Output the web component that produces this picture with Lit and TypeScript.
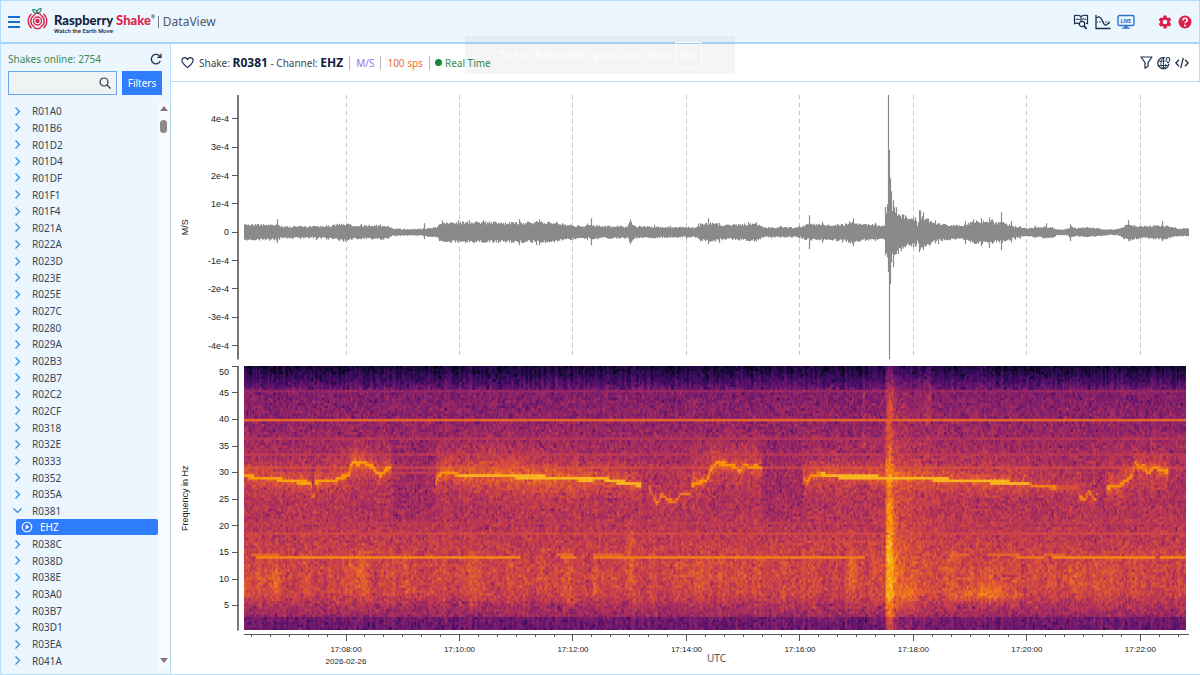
import { LitElement, html, svg, css } from "lit";
import { customElement, property } from "lit/decorators.js";

type Point = [number, number];

const STATIONS = [
  "R01A0", "R01B6", "R01D2", "R01D4", "R01DF", "R01F1", "R01F4", "R021A", "R022A", "R023D", "R023E",
  "R025E", "R027C", "R0280", "R029A", "R02B3", "R02B7", "R02C2", "R02CF", "R0318", "R032E", "R0333",
  "R0352", "R035A", "R0381", "R038C", "R038D", "R038E", "R03A0", "R03B7", "R03D1", "R03EA", "R041A",
];

/* Plot coordinates: one unit is one sample column, 945 columns over the whole time span. */
const SPAN = 945;
const FIRST_MAJOR = 102;
const MINOR_STEP = 18.915;

function randomSource(seed: number) {
  let a = seed;
  return () => {
    a = (a + 0x6d2b79f5) | 0;
    let t = Math.imul(a ^ (a >>> 15), 1 | a);
    t = (t + Math.imul(t ^ (t >>> 7), 61 | t)) ^ t;
    return ((t ^ (t >>> 14)) >>> 0) / 4294967296;
  };
}

function interpolate(points: Point[], x: number): number {
  if (x <= points[0][0]) return points[0][1];
  for (let i = 1; i < points.length; i++) {
    if (x <= points[i][0]) {
      const [x0, y0] = points[i - 1];
      const [x1, y1] = points[i];
      return y0 + ((y1 - y0) * (x - x0)) / (x1 - x0 || 1);
    }
  }
  return points[points.length - 1][1];
}

const pct = (v: number) => `${v}%`;

/* ---------- waveform ---------- */

const ENVELOPE: Point[] = [
  [0, 8], [12, 8], [33, 8], [37, 6], [80, 6], [100, 9], [110, 7], [143, 7], [148, 4], [165, 3], [192, 5],
  [196, 10], [312, 10], [316, 8], [330, 7], [383, 6], [386, 11], [390, 6], [450, 5], [460, 9], [470, 9],
  [480, 7], [512, 9], [520, 5], [555, 5], [562, 8], [600, 8], [608, 12], [612, 9], [636, 7],
  [640, 7], [641, 24], [650, 25], [654, 20], [664, 14], [672, 14], [673, 8],
  [676, 17], [684, 13], [690, 9], [700, 8], [719, 7], [729, 11], [749, 12], [750, 9], [757, 11], [769, 6], [783, 4],
  [800, 6], [809, 5], [813, 3], [822, 3], [826, 6], [832, 4], [843, 5], [853, 4], [863, 3], [873, 3],
  [883, 8], [896, 6], [919, 7], [926, 6], [934, 4], [945, 4],
];

const SPIKES: Record<number, Point> = {
  33: [13, 11], 180: [9, 7], 198: [12, 9], 275: [13, 13], 347: [14, 13], 464: [14, 12], 565: [17, 17],
  609: [14, 14], 643: [28, 25], 644: [137, 40],
  645: [82, 127], 646: [54, 52], 647: [41, 30], 649: [32, 35], 652: [25, 22], 661: [17, 15], 675: [22, 20],
  679: [20, 18], 721: [11, 12], 729: [13, 10], 737: [14, 14], 745: [15, 16], 757: [20, 18], 767: [11, 10], 802: [9, 6],
  826: [8, 9], 884: [12, 9], 918: [11, 9],
};

function waveformPath(): string {
  const rnd = randomSource(11);
  let d = "";
  for (let x = 0; x < SPAN; x++) {
    const e = interpolate(ENVELOPE, x);
    const tall = rnd() > 0.94 ? 1.25 : 1;
    let up = e * tall * (0.76 + rnd() * 0.32);
    let down = e * tall * (0.76 + rnd() * 0.32);
    const spike = SPIKES[x];
    if (spike) [up, down] = spike;
    d += `M${x + 0.5} ${(137 - up).toFixed(1)}V${(137 + down).toFixed(1)}`;
  }
  return d;
}

/* ---------- spectrogram ---------- */

const INFERNO = [
  [0, 0, 4], [27, 12, 65], [74, 12, 107], [120, 28, 109], [165, 44, 96],
  [207, 68, 70], [237, 105, 37], [251, 155, 6], [247, 209, 61], [252, 255, 164],
];

function inferno(v: number): number[] {
  const t = Math.max(0, Math.min(0.999, v)) * 9;
  const i = Math.floor(t);
  const k = t - i;
  return INFERNO[i].map((c, n) => c + (INFERNO[i + 1][n] - c) * k);
}

const BASE: Point[] = [
  [0, 0.31], [2.7, 0.33], [3, 0.43], [5, 0.48], [7, 0.55], [12, 0.56], [16, 0.535], [20, 0.5], [25, 0.475],
  [30, 0.48], [33, 0.45], [36, 0.43], [38, 0.41], [42, 0.385], [45, 0.36], [46, 0.29], [48, 0.18], [50, 0.09],
];

/* Drifting tone, as separate runs of (column, Hz, strength). */
const TRACKS: { strength: number; points: Point[] }[] = [
  { strength: 0.79, points: [[0, 29.4], [10, 29], [36, 28.7], [42, 28.3], [62, 28.2], [67, 27.6]] },
  { strength: 0.7, points: [[67, 27.4], [68, 25.2], [71, 25.8]] },
  { strength: 0.77, points: [[71, 28.2], [90, 28.4], [97, 29], [105, 29.5], [107, 31.4], [111, 32], [113, 31.4], [118, 32], [123, 31.4], [129, 31], [132, 30], [138, 29.6], [142, 30.6], [147, 31]] },
  { strength: 0.76, points: [[191, 27.6], [194, 29.2], [197, 29.9], [209, 29.8], [214, 29.4]] },
  { strength: 0.83, points: [[214, 29.4], [262, 29.3], [330, 28.8], [341, 28.6], [356, 28.9], [370, 28.3], [397, 27.6]] },
  { strength: 0.7, points: [[405, 27.2], [409, 25.4], [413, 24], [417, 25.8], [423, 24.8], [431, 24.4], [436, 25.9], [447, 25.9]] },
  { strength: 0.76, points: [[447, 27.6], [454, 28], [463, 28.6], [466, 30.4], [472, 31.8], [484, 31.4], [491, 31], [495, 30], [500, 31.5], [507, 30.8], [510, 31.2], [517, 30.8]] },
  { strength: 0.74, points: [[558, 29.4], [562, 28], [566, 29.3], [576, 29.7]] },
  { strength: 0.83, points: [[576, 29.6], [601, 29.1], [640, 29], [681, 29], [691, 28.6], [741, 28.3], [784, 27.8]] },
  { strength: 0.72, points: [[784, 27.8], [788, 27.4], [812, 27.2]] },
  { strength: 0.58, points: [[812, 27.2], [834, 27.1]] },
  { strength: 0.72, points: [[834, 25.4], [840, 24.8], [843, 26.3], [846, 26], [850, 24.6], [853, 26.4]] },
  { strength: 0.75, points: [[862, 27.1], [874, 27.5], [881, 28.4], [888, 29.5], [890, 31.8], [895, 30.8], [899, 31.3], [903, 29.7], [909, 31], [916, 30.4], [924, 30]] },
];

const BLOBS: [number, number, number, number, number][] = [
  [8, 10, 9, 3, 0.08], [32, 5, 9, 3, 0.13], [115, 8, 11, 4, 0.07], [300, 20, 10, 3, 0.04], [385, 3, 14, 7, 0.1],
  [350, 3, 9, 3, 0.07], [320, 10, 8, 3, 0.06], [500, 2, 11, 5, 0.09], [607, 3, 11, 5, 0.11], [740, 26, 7, 1.2, 0.13],
  [735, 30, 9, 3, 0.05], [664, 8, 7, 2, 0.1], [830, 30, 10, 3, 0.04], [200, 30, 10, 4, 0.03], [450, 40, 11, 4, 0.04],
  [250, 50, 32, 4, 0.06], [300, 50, 27, 4, 0.05], [110, 25, 33, 3, 0.04], [480, 40, 34, 3, 0.03],
];

const QUIET: Point[] = [[148, 191], [518, 557]];

/* Steady tones: Hz, value, from column, to column. */
const TONES: [number, number, number, number][] = [
  [39.8, 0.65, 0, 945], [45.2, 0.42, 0, 945], [36.1, 0.49, 0, 945], [31, 0.54, 0, 945], [30.1, 0.53, 148, 191],
  [18.4, 0.57, 0, 945], [33.2, 0.5, 0, 945], [16.8, 0.57, 560, 640], [20.2, 0.52, 0, 945],
  [14.5, 0.65, 7, 36], [14, 0.72, 12, 277], [14.5, 0.66, 312, 330], [14, 0.7, 316, 333], [14.5, 0.64, 348, 380], [14, 0.7, 348, 620],
  [14.5, 0.64, 705, 725], [14.5, 0.65, 742, 775], [14, 0.68, 770, 800], [14, 0.72, 807, 910], [14.5, 0.64, 798, 820], [14, 0.72, 915, 945],
];

@customElement("spectrogram-plot")
class SpectrogramPlot extends LitElement {
  static styles = css`
    :host { display: block; position: relative; min-height: 0; min-width: 0; }
    .image { position: absolute; inset: 0; width: 100%; height: 100%; display: block; }
  `;

  render() {
    return html`<canvas class="image" width="640" height="300" role="img" aria-label="Spectrogram"></canvas>`;
  }

  firstUpdated() {
    const canvas = this.renderRoot.querySelector("canvas") as HTMLCanvasElement;
    const ctx = canvas.getContext("2d");
    if (!ctx) return;
    const w = canvas.width;
    const rows = 100;
    const scale = canvas.height / rows;
    const img = ctx.createImageData(w, canvas.height);
    const rnd = randomSource(5);
    const streaks = Array.from({ length: w }, () => rnd() - 0.5);
    const lowStreaks = Array.from({ length: w }, () => rnd() - 0.5);
    const wide = Array.from({ length: w }, (_, i) =>
      (lowStreaks[i] + lowStreaks[(i + 1) % w] + lowStreaks[(i + 2) % w] + lowStreaks[(i + 3) % w]) / 4);

    for (let i = 0; i < w; i++) {
      const x = ((i + 0.5) / w) * 941;
      const run = TRACKS.find((t) => x >= t.points[0][0] && x < t.points[t.points.length - 1][0]);
      const tone = run ? interpolate(run.points, x) : -99;
      const quiet = QUIET.some(([a, b]) => x >= a && x < b);
      for (let j = 0; j < rows; j++) {
        const f = ((rows - j - 0.5) / rows) * 49.7 + 0.3;
        let v = interpolate(BASE, f);
        if (quiet && f > 20 && f < 36) v -= 0.035;

        const amount = f > 46 ? 0.08 : f < 3 ? 0.09 : 0.11;
        let noise = (rnd() + rnd() - 1) * amount;
        if (rnd() > 0.88) noise -= 0.13 * rnd();
        v += noise;
        v += streaks[i] * (f > 45 ? 0.12 : f < 3 ? 0.1 : 0.03);
        if (f > 4 && f < 15) v += wide[i] * 0.13;

        for (const [cx, rx, cf, rf, gain] of BLOBS) {
          const q = ((x - cx) / rx) ** 2 + ((f - cf) / rf) ** 2;
          if (q < 4) v += gain * Math.exp(-q);
        }

        const since = x - 641;
        if (since >= 0) {
          const weight = f < 25 ? 1 : f > 46 ? 0.8 : 0.7;
          v += (0.17 * Math.exp(-((since - 4) ** 2) / 18) + 0.13 * Math.exp(-since / 26)) * weight;
        }
        if (x > 681 && x < 686 && f > 38) v += 0.07;
        if (x > 617 && x < 620 && f > 34) v += 0.06;

        for (const [hz, level, from, to] of TONES) {
          if (x >= from && x < to && Math.abs(f - hz) < 0.26) {
            v = level > 0.6 ? Math.max(v, level + (rnd() - 0.5) * 0.03) : Math.max(v, level - 0.01 + noise * 0.3);
          }
        }

        if (run) {
          const off = Math.abs(f - tone);
          if (off < 0.36) v = Math.max(v, run.strength + (rnd() - 0.5) * 0.03);
          else if (off < 7) v += 0.15 * Math.exp(-off / 2) * (run.strength > 0.73 ? 1 : 0.4);
        }

        const [r, g, b] = inferno(v);
        for (let s = 0; s < scale; s++) img.data.set([r, g, b, 255], ((j * scale + s) * w + i) * 4);
      }
    }
    ctx.putImageData(img, 0, 0);
  }
}

@customElement("waveform-plot")
class WaveformPlot extends LitElement {
  static styles = css`
    :host { display: block; position: relative; min-height: 0; min-width: 0; }
    .plot { position: absolute; inset: 0; width: 100%; height: 100%; display: block; }
    .grid { stroke: #c8c8c8; stroke-width: 1; stroke-dasharray: 4 4; shape-rendering: crispEdges; }
    .trace { stroke: #8a8a8a; stroke-width: 1.2; fill: none; }
  `;

  render() {
    const majors = Array.from({ length: 8 }, (_, i) => pct(((FIRST_MAJOR + i * 6 * MINOR_STEP) / SPAN) * 100));
    return html`<svg class="plot" role="img" aria-label="Ground velocity waveform">
      ${majors.map((x) => svg`<line class="grid" x1=${x} x2=${x} y1="0" y2="99%"></line>`)}
      <svg width="100%" height="100%" viewBox="0 0 945 264" preserveAspectRatio="none">
        <path class="trace" d=${waveformPath()}></path>
      </svg>
    </svg>`;
  }
}

interface Tick { label: string; at: number; labelAt?: number; }

@customElement("value-axis")
class ValueAxis extends LitElement {
  static styles = css`
    :host { display: block; position: relative; min-height: 0; }
    .axis { position: absolute; inset: 0; width: 100%; height: 100%; overflow: visible; display: block; }
    .rule { stroke: #555; stroke-width: 1; shape-rendering: crispEdges; }
    .spine { stroke: #777; stroke-width: 2; }
    text { font-family: "Liberation Sans", Arial, sans-serif; fill: #222; }
    .tick { font-size: 9px; text-anchor: end; }
    .name { font-size: 9px; text-anchor: middle; }
    .name-box { overflow: visible; }
  `;
  @property() name = "";
  @property({ attribute: false }) ticks: Tick[] = [];

  render() {
    return html`<svg class="axis">
      <line class="spine" x1="67" x2="67" y1="0" y2="100%"></line>
      ${this.ticks.map((t) => svg`
        <line class="rule" x1="61" x2="67" y1=${pct(t.at)} y2=${pct(t.at)}></line>
        <text class="tick" x="58" y=${pct(t.labelAt ?? t.at)} dy="3">${t.label}</text>`)}
      <svg class="name-box" x="17" y="50%"><text class="name" transform="rotate(-90)">${this.name}</text></svg>
    </svg>`;
  }
}

@customElement("time-axis")
class TimeAxis extends LitElement {
  static styles = css`
    :host { display: block; min-width: 0; }
    .axis { width: 100%; height: 44px; overflow: visible; display: block; }
    .rule { stroke: #555; stroke-width: 1; shape-rendering: crispEdges; }
    .tick { font: 8px "Liberation Sans", Arial, sans-serif; fill: #222; text-anchor: middle; }
    .name { font: 10px "Noto Sans", sans-serif; fill: #555; text-anchor: middle; }
  `;

  render() {
    const ticks = Array.from({ length: 50 }, (_, i) => i - 5);
    return html`<svg class="axis">
      <line class="rule" x1="0" x2="100%" y1="4" y2="4"></line>
      ${ticks.map((k) => {
        const x = pct(((FIRST_MAJOR + k * MINOR_STEP) / SPAN) * 100);
        const major = k % 6 === 0;
        const minute = String(8 + k / 3).padStart(2, "0");
        return svg`<line class="rule" x1=${x} x2=${x} y1="4" y2=${major ? 11 : 7}></line>
          ${major ? svg`<text class="tick" x=${x} y="22">17:${minute}:00</text>` : ""}
          ${k === 0 ? svg`<text class="tick" x=${x} y="34">2026-02-26</text>` : ""}`;
      })}
      <text class="name" x="50%" y="32">UTC</text>
    </svg>`;
  }
}

const logoMark = html`<svg width="21" height="23" viewBox="0 0 21 23" fill="none" aria-hidden="true">
  <g stroke="#d9284c" stroke-width="1.4" stroke-linecap="round">
    <circle cx="10.500" cy="13" r="1.500" fill="#d9284c"></circle>
    <circle cx="10.500" cy="13" r="4"></circle>
    <path d="M7 7.300A6.700 6.700 0 0 0 7 18.700M14 7.300a6.700 6.700 0 0 1 0 11.400M7.500 19.800q3 1.600 6 0"></path>
    <path d="M4.200 6.200a9.300 9.300 0 0 0 0 13.600M16.800 6.200a9.300 9.300 0 0 1 0 13.600M7.500 6.200q3-1.600 6 0"></path>
  </g>
  <path d="M10.500 5C7.500 5.200 6 3.800 5.600 1.800c2.600-.4 4.400.8 4.900 3.200ZM10.500 5c-.6-2.500.6-4.200 3.400-4.500.5 2.300-.9 4.200-3.400 4.500Z" stroke="#2f8f68" stroke-width="1.200"></path>
</svg>`;

const compareIcon = html`<svg width="16" height="16" viewBox="0 0 16 16" fill="none" stroke="#1c2f4d" stroke-width="1.200" aria-hidden="true">
  <path d="M8 2.500C6.500 1.200 3 1 1.500 1.600v8c1.500-.6 3.500-.5 5 .4M8 2.500C9.500 1.200 13 1 14.500 1.600v8l-1.500-.2M8 2.500V7"></path>
  <path d="M2.800 5.600h1l.7-1 .8 1.400.6-.6h.8M9 5.300h1l.7-1 .9 1.600.6-.8h1.100" stroke-width="1"></path>
  <circle cx="9" cy="10" r="2.700"></circle><path d="m11 12 2.600 2.800" stroke-width="1.800"></path>
</svg>`;
const chartIcon = html`<svg width="16" height="16" viewBox="0 0 16 16" fill="none" stroke="#1c2f4d" aria-hidden="true">
  <path d="M1 1v13.500h14.500" stroke-width="1.300"></path><path d="M1 8h14" stroke-width=".8" stroke-dasharray="2 1"></path>
  <path d="M1.500 4C3.500 2.300 5.500 2.600 6.800 5.500S9 11.800 11 11.200c1.500-.4 1-2 3.500-2.200" stroke-width="1.300"></path>
</svg>`;
const liveIcon = html`<svg width="18" height="16" viewBox="0 0 18 16" aria-hidden="true">
  <rect x="1" y="1.500" width="16" height="10" rx="1.500" fill="none" stroke="#2b74c9" stroke-width="1.400"></rect>
  <path d="M7.500 12h3v1.600h2.300v1.200H5.200v-1.200h2.300z" fill="#2b74c9"></path>
  <text x="9" y="8.500" text-anchor="middle" font-family="Roboto, sans-serif" font-size="5" font-weight="900" fill="#2b74c9">LIVE</text>
</svg>`;
const gearIcon = html`<svg width="14" height="14" viewBox="0 0 24 24" fill="#dc1f4a" aria-hidden="true">
  <path fill-rule="evenodd" d="M9.500 1h5l.7 3.100 1.900 1.100 3.100-1 2.500 4.300-2.400 2.200v2.600l2.400 2.200-2.500 4.300-3.100-1-1.900 1.100-.7 3.100h-5l-.7-3.100-1.900-1.100-3.100 1-2.500-4.300 2.400-2.200v-2.600L1.300 8.500l2.500-4.300 3.100 1 1.900-1.100zM12 8a4 4 0 1 0 0 8 4 4 0 0 0 0-8z"></path>
</svg>`;
const helpIcon = html`<svg width="14" height="14" viewBox="0 0 14 14" fill="none" aria-hidden="true">
  <circle cx="7" cy="7" r="6.500" fill="#dc1f4a"></circle>
  <path d="M4.900 5.500c0-3 4.300-2.700 4.300-.3C9.200 6.800 7 6.700 7 8.300" stroke="#fff" stroke-width="1.500"></path><circle cx="7" cy="10.400" r="1" fill="#fff"></circle>
</svg>`;
const refreshIcon = html`<svg width="12" height="12" viewBox="0 0 12 12" fill="none" stroke="#22324a" stroke-width="1.300" aria-hidden="true">
  <path d="M10.300 8a4.700 4.700 0 1 1-.3-4.400M11 .8v3.500H7.300"></path>
</svg>`;
const searchIcon = html`<svg width="12" height="12" viewBox="0 0 12 12" fill="none" stroke="#2b3648" stroke-width="1.200" aria-hidden="true">
  <circle cx="5" cy="5" r="4"></circle><path d="m8 8 3.500 3.500"></path>
</svg>`;
const heartIcon = html`<svg width="13" height="13" viewBox="0 0 14 13" fill="none" stroke="#14284b" stroke-width="1.200" aria-hidden="true">
  <path d="M7 12C4.500 10 1 7.300 1 4.300 1 .8 5.500.2 7 3.300 8.500.2 13 .8 13 4.300 13 7.300 9.500 10 7 12Z"></path>
</svg>`;
const funnelIcon = html`<svg width="13" height="13" viewBox="0 0 13 13" fill="none" stroke="#1c2f4d" stroke-width="1.200" stroke-linejoin="round" aria-hidden="true">
  <path d="M1 1h11L8 6.700v3.600L5 12.200V6.700z"></path>
</svg>`;
const globeIcon = html`<svg width="14" height="14" viewBox="0 0 14 14" fill="none" stroke="#1c2f4d" aria-hidden="true">
  <path d="M8.200 1.800A5.600 5.600 0 1 0 12 7.800" stroke-width="1.200"></path>
  <path d="M6.500 1.700C3 4.500 3 10 6.500 12.800M6.500 1.700V13M9 8c0 2-.8 3.800-2.500 4.800M1 5.200h7.500M1 9.500h11" stroke-width=".9"></path>
  <path d="M11 7.200C9.800 5.600 9.200 4.500 9.200 3.100a1.800 1.800 0 0 1 3.600 0C12.800 4.500 12.200 5.600 11 7.200Z"></path><circle cx="11" cy="3.100" r=".5" fill="#1c2f4d" stroke="none"></circle>
</svg>`;
const codeIcon = html`<svg width="14" height="12" viewBox="0 0 14 12" fill="none" stroke="#1c2f4d" stroke-width="1.300" aria-hidden="true">
  <path d="M4 2.800.9 6 4 9.200M10 2.800 13.100 6 10 9.200M8.300.8 5.700 11.200"></path>
</svg>`;
const playIcon = html`<svg width="12" height="12" viewBox="0 0 12 12" fill="none" stroke="#fff" aria-hidden="true">
  <circle cx="6" cy="6" r="4.800" stroke-width="1.100"></circle><path d="M4.700 3.600v4.800L8.500 6z" fill="#fff" stroke="none"></path>
</svg>`;
const chevron = (open: boolean) => html`<svg width="9" height="9" viewBox="0 0 9 9" fill="none" stroke="#2f8be0" stroke-width="1.200" aria-hidden="true">
  <path d=${open ? "M.5 2.500 4.500 6.500l4-4" : "M2.500.5 6.500 4.500l-4 4"}></path>
</svg>`;

@customElement("app-root")
class AppRoot extends LitElement {
  static styles = css`
    :host {
      display: grid;
      grid-template-rows: 44px minmax(0, 1fr);
      height: 100vh;
      position: relative;
      font-family: "Noto Sans", "Open Sans", sans-serif;
      font-size: 10px;
      line-height: 16px;
      color: #3c4453;
      background: #fff;
    }
    * { box-sizing: border-box; }
    button { font: inherit; color: inherit; background: none; border: 0; padding: 0; display: flex; align-items: center; }
    svg { flex: none; display: block; }

    .top {
      display: flex; align-items: center; padding: 0 7px;
      background: #ebf6ff;
      border: 1px solid #b4daf9; border-bottom: 2px solid #a9d5fa;
    }
    .menu { flex-direction: column; gap: 3px; width: 12px; align-items: stretch; }
    .menu span { height: 2px; background: #176fd0; }
    .brand { display: flex; align-items: center; gap: 6px; margin-left: 7px; color: #16233f; text-decoration: none; }
    .mark { padding-bottom: 4px; }
    .brand-text { display: grid; padding-top: 4px; }
    .brand-name { font: 900 13px/14px Lato, sans-serif; }
    .brand-name em { font-style: normal; color: #e01f4d; }
    .reg { font: 5px/5px Roboto, sans-serif; vertical-align: 6px; }
    .slogan { font: 500 6px/8px Roboto, sans-serif; }
    .product { margin: 0; padding-left: 4px; font-size: 12px; line-height: 16px; font-weight: 400; color: #4c5668; }
    .divider-bar { width: 1px; height: 12px; background: #707b8c; margin-left: 3px; }
    .tools { display: flex; align-items: center; gap: 6px; margin-left: auto; }
    .tools .apart { margin-left: 17px; }

    .body { display: grid; grid-template-columns: 171px minmax(0, 1fr); min-height: 0; }

    .side {
      display: flex; flex-direction: column; min-height: 0;
      background: #ebf6ff;
      border: solid #b9def9; border-width: 0 1px 1px;
    }
    .side-head { display: flex; justify-content: space-between; align-items: center; height: 27px; padding: 2px 8px 0 7px; color: #3d8b54; }
    .finder { display: grid; grid-template-columns: 109px 40px; gap: 5px; padding-left: 7px; height: 24px; }
    .search { display: flex; align-items: center; background: #eef3f4; border: 1px solid #6fa5ee; padding-right: 5px; }
    .search input { flex: 1; min-width: 0; height: 100%; border: 0; outline: 0; background: transparent; font: inherit; padding: 0 4px; }
    .filters { justify-content: center; background: #2f7dfd; color: #fff; }
    .tree-box { display: grid; grid-template-columns: minmax(0, 1fr) 11px; flex: 1; min-height: 0; margin: 8px 1px 5px 0; }
    .tree, .branch { list-style: none; margin: 0; padding: 0; }
    .tree { display: grid; grid-auto-rows: minmax(16px, 1fr); min-height: 0; }
    .tree li { display: grid; align-items: center; }
    .tree .with-child { grid-row: span 2; grid-template-rows: 1fr 1fr; }
    .station { gap: 10px; padding-left: 12px; }
    .branch { padding-left: 15px; height: 100%; }
    .channel { gap: 7px; padding-left: 5px; width: 100%; height: 100%; background: #2f7dfd; color: #fff; border-radius: 2px; }
    .scroll { display: flex; flex-direction: column; align-items: center; background: #f8fbfd; padding: 3px 0; }
    .arrow { border: 4px solid transparent; height: 0; }
    .arrow.up { border-top: 0; border-bottom: 5px solid #7d7d7d; }
    .arrow.down { border-bottom: 0; border-top: 5px solid #7d7d7d; margin-top: auto; margin-bottom: 3px; }
    .thumb { width: 7px; height: 13px; border-radius: 4px; background: #8a8a8a; margin-top: 9px; }

    .main { display: flex; flex-direction: column; min-width: 0; min-height: 0; }
    .title {
      display: flex; align-items: center; height: 38px; padding: 0 10px;
      border: solid #b4ddf8; border-width: 0 1px 1px 0;
    }
    .facts { display: flex; align-items: center; margin: 0; font-size: 10px; font-weight: 400; padding-left: 5px; white-space: pre; }
    .facts strong { font-size: 12px; color: #10203f; }
    .facts span { margin-left: 6px; padding-left: 6px; border-left: 1px solid #b9b9b9; line-height: 14px; }
    .unit { color: #9273e6; }
    .rate { color: #ea6d35; }
    .facts .live { display: flex; align-items: center; gap: 3px; color: #3d8b54; padding-left: 5px; }
    .live::before { content: ""; width: 7px; height: 7px; border-radius: 50%; background: #138a36; }
    .actions { display: flex; align-items: center; gap: 4px; margin-left: auto; }

    .charts {
      flex: 1; min-height: 0;
      display: grid; grid-template-columns: 73px minmax(0, 1fr);
      grid-template-rows: minmax(0, 1fr) minmax(0, 1fr) 38px;
      row-gap: 6px;
      padding: 13px 11px 0 0;
      border-bottom: 1px solid #b9def9;
    }
    .spectrogram { margin-right: 3px; }
    .time { grid-column: 2; margin-top: -6px; }

    .notice {
      position: absolute; top: 36px; left: 50%; margin-left: -135px;
      width: 270px; height: 38px;
      display: flex; align-items: center; justify-content: center; gap: 5px;
      background: rgba(20, 20, 20, 0.045); color: #fff;
      font: 11px/16px "Noto Sans", sans-serif; pointer-events: none;
    }
    .notice kbd { font: inherit; border: 1px solid #fff; padding: 4px; border-radius: 1px; }
  `;

  private velocityTicks: Tick[] = Array.from({ length: 9 }, (_, i) => {
    const n = 4 - i;
    return { label: n === 0 ? "0" : `${n}e-4`, at: ((23.8 + i * 28.3) / 264) * 100 };
  });

  private frequencyTicks: Tick[] = Array.from({ length: 10 }, (_, i) => {
    const at = ((i * 26.65) / 265) * 100;
    return { label: String(50 - i * 5), at: at + 0.1, labelAt: i === 0 ? 2.4 : at };
  });

  private station(id: string) {
    const open = id === "R0381";
    return html`<li class=${open ? "with-child" : ""}>
      <button class="station" aria-expanded=${open ? "true" : "false"}>${chevron(open)}${id}</button>
      ${open ? html`<ul class="branch"><li><button class="channel">${playIcon}EHZ</button></li></ul>` : ""}
    </li>`;
  }

  render() {
    return html`
      <header class="top">
        <button class="menu" aria-label="Menu"><span></span><span></span><span></span></button>
        <a class="brand" href="#">
          <div class="mark">${logoMark}</div>
          <div class="brand-text">
            <div class="brand-name">Raspberry <em>Shake</em><span class="reg">®</span></div>
            <div class="slogan">Watch the Earth Move</div>
          </div>
        </a>
        <div class="divider-bar"></div>
        <h1 class="product">DataView</h1>
        <nav class="tools">
          <button aria-label="Compare">${compareIcon}</button>
          <button aria-label="Waveform">${chartIcon}</button>
          <button aria-label="Live view">${liveIcon}</button>
          <button class="apart" aria-label="Settings">${gearIcon}</button>
          <button aria-label="Help">${helpIcon}</button>
        </nav>
      </header>
      <div class="body">
        <aside class="side">
          <div class="side-head">Shakes online: 2754<button aria-label="Refresh">${refreshIcon}</button></div>
          <div class="finder">
            <label class="search"><input type="text" aria-label="Search stations" />${searchIcon}</label>
            <button class="filters">Filters</button>
          </div>
          <div class="tree-box">
            <ul class="tree">${STATIONS.map((id) => this.station(id))}</ul>
            <div class="scroll">
              <div class="arrow up"></div><div class="thumb"></div><div class="arrow down"></div>
            </div>
          </div>
        </aside>
        <main class="main">
          <div class="title">
            <button aria-label="Favourite">${heartIcon}</button>
            <h2 class="facts">Shake: <strong>R0381</strong> - Channel: <strong>EHZ</strong><span class="unit">M/S</span><span class="rate">100 sps</span><span class="live">Real Time</span></h2>
            <div class="actions">
              <button aria-label="Filter">${funnelIcon}</button>
              <button aria-label="Station map">${globeIcon}</button>
              <button aria-label="Embed code">${codeIcon}</button>
            </div>
          </div>
          <section class="charts">
            <value-axis name="M/S" .ticks=${this.velocityTicks}></value-axis>
            <waveform-plot></waveform-plot>
            <value-axis name="Frequency in Hz" .ticks=${this.frequencyTicks}></value-axis>
            <spectrogram-plot class="spectrogram"></spectrogram-plot>
            <time-axis class="time"></time-axis>
          </section>
        </main>
      </div>
      <div class="notice">To exit full screen, press and hold <kbd>Esc</kbd></div>
    `;
  }
}
